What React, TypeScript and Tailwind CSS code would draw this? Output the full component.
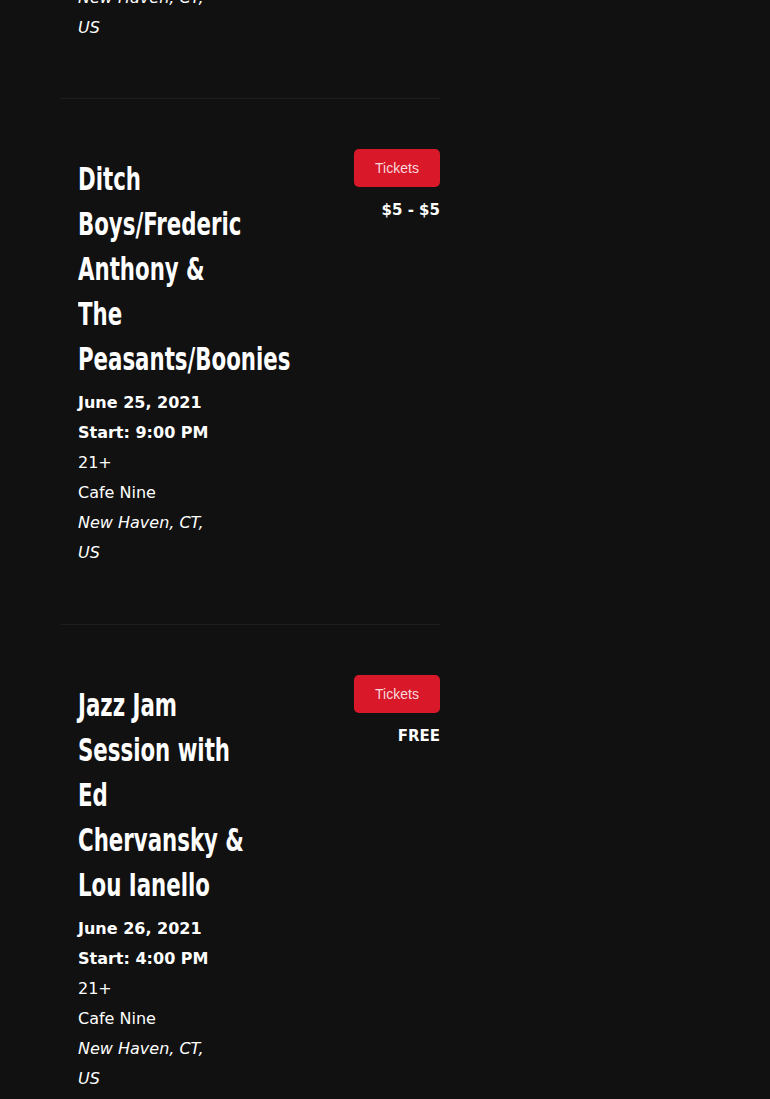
type Event = {
  title: string
  date: string
  start: string
  age: string
  venue: string
  city: string
  price: string
}

const events: Event[] = [
  {
    title: 'Ditch Boys/Frederic Anthony & The Peasants/Boonies',
    date: 'June 25, 2021',
    start: 'Start: 9:00 PM',
    age: '21+',
    venue: 'Cafe Nine',
    city: 'New Haven, CT, US',
    price: '$5 - $5',
  },
  {
    title: 'Jazz Jam Session with Ed Chervansky & Lou Ianello',
    date: 'June 26, 2021',
    start: 'Start: 4:00 PM',
    age: '21+',
    venue: 'Cafe Nine',
    city: 'New Haven, CT, US',
    price: 'FREE',
  },
]

function EventRow({ event }: { event: Event }) {
  return (
    <div className="border-t border-[#1d1d1d] pt-[50px] pb-[56px]">
      <div className="flex justify-between">
        <div className="ml-[18px] pt-2">
          {/* no condensed display face installed: squeeze a condensed sans */}
          <h2 className="w-[228px] origin-left scale-x-[0.74] font-['DejaVu_Sans_Condensed','DejaVu_Sans',sans-serif] font-bold text-[32px] leading-[45px] text-white">
            {event.title}
          </h2>
          <div className="mt-[6px] w-[140px] text-[16px] leading-[30px] text-white">
            <p className="font-bold">{event.date}</p>
            <p className="font-bold">{event.start}</p>
            <p>{event.age}</p>
            <p>{event.venue}</p>
            <p className="italic">{event.city}</p>
          </div>
        </div>
        <div className="flex flex-col items-end">
          <button className="h-[38px] w-[86px] rounded-[5px] bg-[#d9182a] font-['Liberation_Sans',Arial,sans-serif] text-[14px] text-[#f6dadd]">
            Tickets
          </button>
          <p className="mt-[11px] text-[15px] leading-[24px] font-semibold text-white">
            {event.price}
          </p>
        </div>
      </div>
    </div>
  )
}

export default function App() {
  return (
    <main className="min-h-screen w-full overflow-hidden bg-[#111111] font-['DejaVu_Sans',sans-serif]">
      <div className="ml-[60px] w-[380px]">
        <div className="-mt-[17px] pb-[55px] pl-[18px] w-[158px] text-[16px] leading-[30px] italic text-white">
          New Haven, CT, US
        </div>
        {events.map((event) => (
          <EventRow key={event.title} event={event} />
        ))}
      </div>
    </main>
  )
}
